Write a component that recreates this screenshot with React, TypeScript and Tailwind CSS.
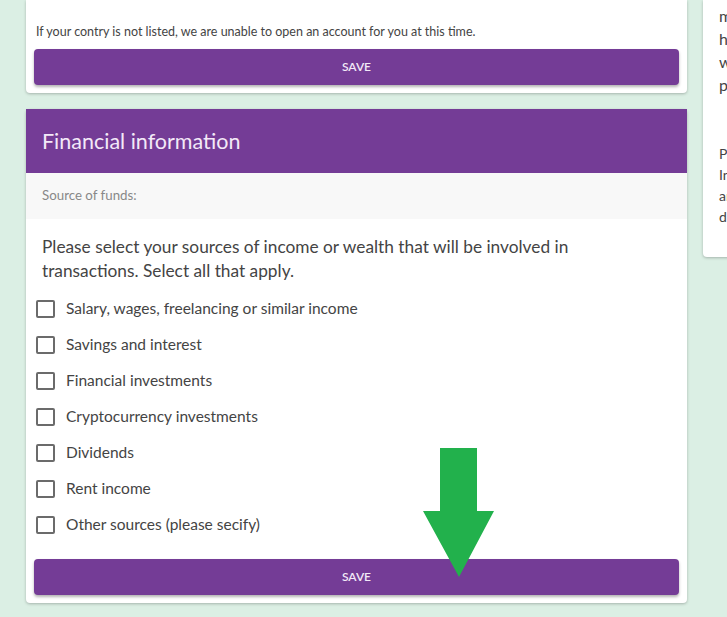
import React from 'react';

const sources = [
  'Salary, wages, freelancing or similar income',
  'Savings and interest',
  'Financial investments',
  'Cryptocurrency investments',
  'Dividends',
  'Rent income',
  'Other sources (please secify)',
];

const font = { fontFamily: '"Lato", "Open Sans", sans-serif' };

export default function App() {
  return (
    <div className="relative h-[617px] w-[727px] overflow-hidden bg-[#dbefe4]" style={font}>
      <div className="flex gap-4 pl-[26px]">
        {/* Left column */}
        <div className="flex w-[661px] shrink-0 flex-col gap-4">
          {/* Top card (scrolled) */}
          <div className="rounded-b-sm bg-white px-2 pb-2 shadow-[0_1px_3px_rgba(0,0,0,0.25)]">
            <p className="pt-[24px] pl-[2px] text-[12.5px] leading-[16px] text-[#444]">
              If your contry is not listed, we are unable to open an account for you at this time.
            </p>
            <button className="mt-[9px] h-9 w-full rounded-sm bg-[#743c96] text-[12px] font-semibold text-[#f2e9f7] shadow-[0_2px_3px_rgba(0,0,0,0.3)]">
              SAVE
            </button>
          </div>

          {/* Financial information card */}
          <div className="rounded-sm bg-white shadow-[0_1px_3px_rgba(0,0,0,0.25)]">
            <div className="flex h-16 items-center bg-[#743c96] px-4">
              <h2 className="text-[21.5px] text-[#f3e9f8]">Financial information</h2>
            </div>
            <div className="flex h-[46px] items-center bg-[#f8f8f8] px-4">
              <span className="text-[13.3px] text-[#888]">Source of funds:</span>
            </div>
            <div className="px-4 pt-[16px]">
              <p className="max-w-[560px] text-[17.3px] leading-6 text-[#444]">
                Please select your sources of income or wealth that will be involved in transactions. Select all that apply.
              </p>
            </div>
            <div className="mt-[8px] flex flex-col pl-[10px]">
              {sources.map((s) => (
                <label key={s} className="flex h-9 items-center gap-[11px]">
                  <span className="h-[18px] w-[19px] rounded-[2px] border-2 border-[#6b6b6b] bg-white" />
                  <span className="text-[15.5px] text-[#444]">{s}</span>
                </label>
              ))}
            </div>
            <div className="px-2 pt-[16px] pb-2">
              <button className="h-9 w-full rounded-sm bg-[#743c96] text-[12px] font-semibold text-[#f2e9f7] shadow-[0_2px_3px_rgba(0,0,0,0.3)]">
                SAVE
              </button>
            </div>
          </div>
        </div>

        {/* Right card (cut off) */}
        <div className="h-[257px] w-[300px] shrink-0 rounded-b-sm bg-white pl-4 pt-[4px] shadow-[0_1px_3px_rgba(0,0,0,0.25)]">
          <div className="text-[16px] leading-[23px] text-[#444]">
            <p className="whitespace-nowrap">must verify your identity</p>
            <p className="whitespace-nowrap">how we store your details</p>
            <p className="whitespace-nowrap">we keep your data safe</p>
            <p className="whitespace-nowrap">protected at all times</p>
          </div>
          <div className="mt-[47px] text-[14px] leading-[21px] text-[#444]">
            <p className="whitespace-nowrap">Please note</p>
            <p className="whitespace-nowrap">Information you provide</p>
            <p className="whitespace-nowrap">and the documents</p>
            <p className="whitespace-nowrap">during verification</p>
          </div>
        </div>
      </div>

      {/* Green arrow annotation */}
      <svg className="absolute left-0 top-0" width="727" height="617" viewBox="0 0 727 617">
        <polygon
          points="440,448 477,448 477,511 494,511 459,577 423,511 440,511"
          fill="#22b14c"
        />
      </svg>
    </div>
  );
}
